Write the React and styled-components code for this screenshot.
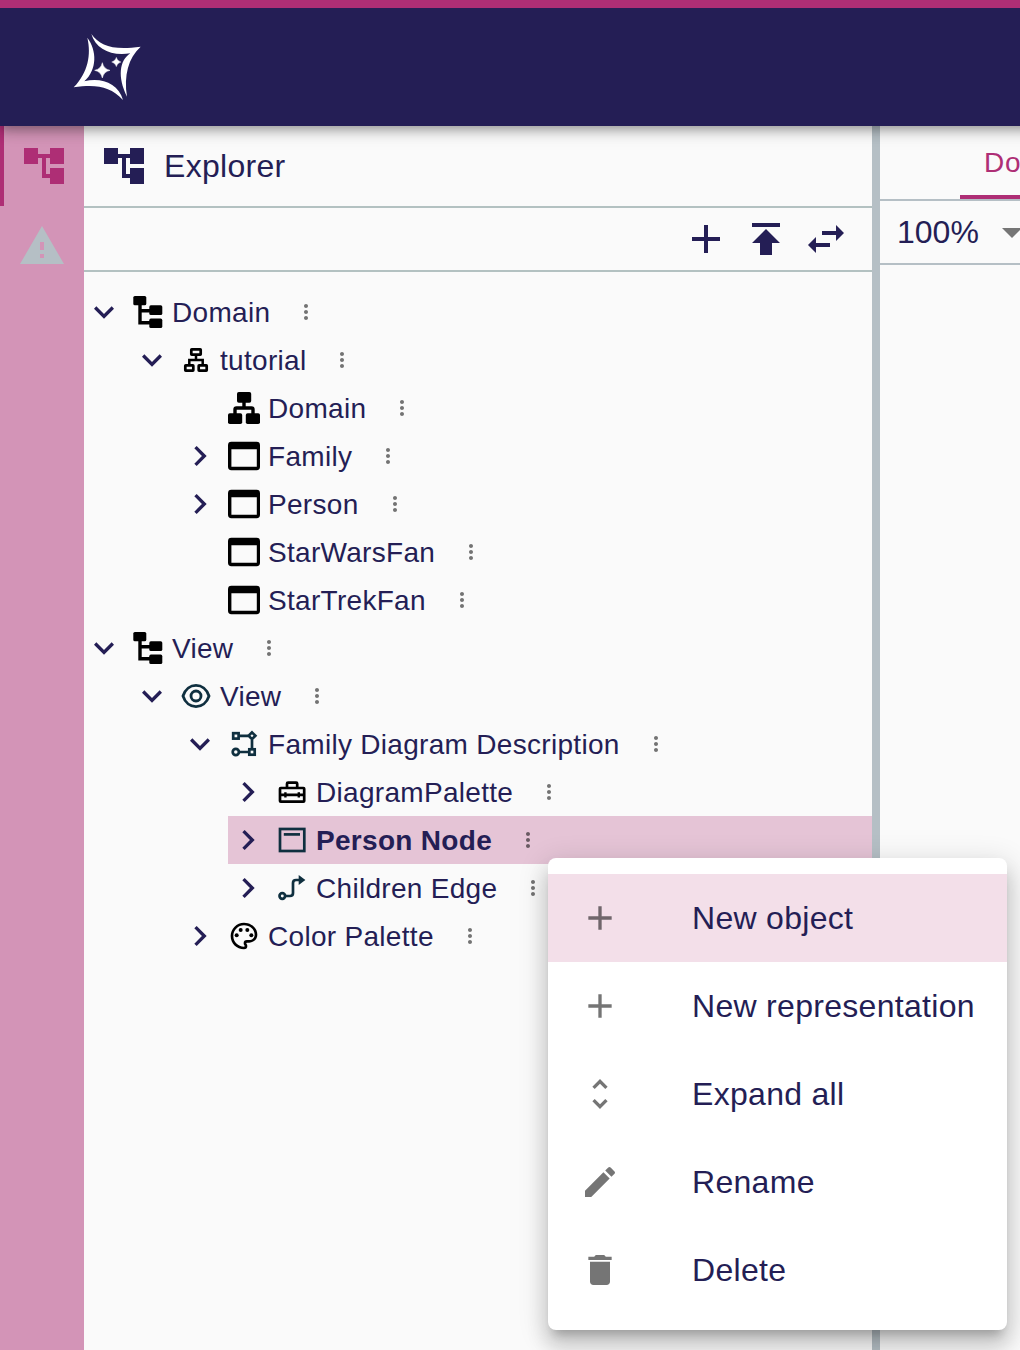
import React from 'react';
import styled, { createGlobalStyle, css } from 'styled-components';
import { MdOutlinePalette } from 'react-icons/md';

const color = {
  pink: '#ae2e75',
  navy: '#241e55',
  rail: '#d394b7',
  selected: '#e5c4d6',
  hover: '#f3dfe9',
  grey: '#b5bfc5',
  line: '#b3c1c1',
  background: '#fafafa',
  ink: '#0f2f3f',
};

const GlobalStyle = createGlobalStyle`
  *, *::before, *::after { box-sizing: border-box; }
  body {
    margin: 0;
    overflow: hidden;
    background: ${color.background};
    color: ${color.navy};
    font-family: "Liberation Sans", Arial, Helvetica, sans-serif;
  }
`;

const Page = styled.div`
  position: relative;
  display: flex;
  flex-direction: column;
  width: 1020px;
  height: 1350px;
  overflow: hidden;
`;

const AppBar = styled.header`
  position: relative;
  z-index: 1;
  flex: none;
  display: flex;
  align-items: center;
  width: 1060px;
  height: 126px;
  padding-left: 72px;
  border-top: 8px solid ${color.pink};
  background: ${color.navy};
  box-shadow: 0 4px 8px -2px rgba(0, 0, 0, 0.2), 0 8px 10px 0 rgba(0, 0, 0, 0.14),
    0 2px 20px 0 rgba(0, 0, 0, 0.12);
`;

const Workbench = styled.main`
  flex: 1;
  display: flex;
  min-height: 0;
`;

const Rail = styled.nav`
  flex: none;
  display: flex;
  flex-direction: column;
  width: 84px;
  background: ${color.rail};
`;

const RailButton = styled.button`
  display: flex;
  align-items: center;
  justify-content: center;
  height: 80px;
  padding: 0;
  border: 0;
  background: none;
  color: ${(p) => (p.$active ? color.pink : color.grey)};
  ${(p) => p.$active && css`border-left: 4px solid ${color.pink};`}
`;

const Panel = styled.section`
  flex: none;
  width: 788px;
  display: flex;
  flex-direction: column;
`;

const PanelHeader = styled.div`
  display: flex;
  align-items: center;
  gap: 16px;
  height: 82px;
  padding: 0 16px;
  border-bottom: 2px solid ${color.line};
  font-size: 32px;
  letter-spacing: 0.3px;
`;

const PanelToolbar = styled.div`
  display: flex;
  align-items: center;
  justify-content: flex-end;
  gap: 12px;
  height: 64px;
  padding-right: 22px;
  border-bottom: 2px solid ${color.line};
`;

const Tree = styled.ul`
  margin: 0;
  padding: 16px 0 0;
  list-style: none;
`;

const Branch = styled.ul`
  margin: 0;
  padding: 0 0 0 48px;
  list-style: none;
`;

const Row = styled.div`
  display: flex;
  align-items: center;
  height: 48px;
  background: ${(p) => (p.$selected ? color.selected : 'transparent')};
  font-size: 28px;
  font-weight: ${(p) => (p.$selected ? 700 : 400)};
  letter-spacing: 0.3px;
  white-space: nowrap;
`;

const Toggle = styled.span`
  flex: none;
  display: flex;
  width: 40px;
  height: 40px;
  margin-right: 8px;
`;

const Label = styled.span`
  margin: 0 24px 0 8px;
  padding-top: 2px;
`;

const More = styled.span`
  display: flex;
  color: rgba(0, 0, 0, 0.54);
`;

const Splitter = styled.div`
  flex: none;
  width: 8px;
  background: ${color.grey};
`;

const Editor = styled.section`
  flex: 1;
  min-width: 0;
  overflow: hidden;
`;

const TabBar = styled.div`
  display: flex;
  height: 75px;
  padding-left: 80px;
  border-bottom: 2px solid ${color.grey};
`;

const Tab = styled.div`
  flex: none;
  display: flex;
  align-items: center;
  padding: 5px 24px 0;
  border-bottom: 4px solid ${color.pink};
  color: ${color.pink};
  font-size: 28px;
  letter-spacing: 0.8px;
`;

const ZoomBar = styled.div`
  display: flex;
  align-items: center;
  gap: 9px;
  height: 64px;
  padding-left: 17px;
  border-bottom: 2px solid ${color.grey};
  font-size: 32px;
  svg { color: #757575; }
`;

const Menu = styled.div`
  position: absolute;
  z-index: 2;
  left: 548px;
  top: 858px;
  width: 459px;
  padding: 16px 0;
  border-radius: 8px;
  background: #fff;
  box-shadow: 0 10px 10px -6px rgba(0, 0, 0, 0.2), 0 16px 20px 2px rgba(0, 0, 0, 0.14),
    0 6px 28px 4px rgba(0, 0, 0, 0.12);
`;

const MenuItem = styled.div`
  display: flex;
  align-items: center;
  height: 88px;
  padding: 0 32px;
  background: ${(p) => (p.$hovered ? color.hover : 'transparent')};
  font-size: 32px;
  letter-spacing: 0.3px;
  white-space: nowrap;
`;

const MenuIcon = styled.span`
  flex: none;
  display: flex;
  width: 112px;
  color: rgba(0, 0, 0, 0.54);
`;

const Svg = styled.svg`
  display: block;
  flex: none;
`;

const glyphs = {
  tree: 'M22 11V3h-7v3H9V3H2v8h7V8h2v10h4v3h7v-8h-7v3h-2V8h2v3z',
  warning: 'M1 21h22L12 2 1 21zm12-3h-2v-2h2v2zm0-4h-2v-4h2v4z',
  add: 'M19 13h-6v6h-2v-6H5v-2h6V5h2v6h6v2z',
  top: 'M5 4v2h14V4H5zm0 10h4v6h6v-6h4l-7-7-7 7z',
  swap: 'M6.99 11L3 15l3.99 4v-3H14v-2H6.99v-3zM21 9l-3.99-4v3H10v2h7.01v3L21 9z',
  down: 'M16.59 8.59L12 13.17 7.41 8.59 6 10l6 6 6-6z',
  right: 'M10 6L8.59 7.41 13.17 12l-4.58 4.59L10 18l6-6z',
  more: 'M12 8c1.1 0 2-.9 2-2s-.9-2-2-2-2 .9-2 2 .9 2 2 2zm0 2c-1.1 0-2 .9-2 2s.9 2 2 2 2-.9 2-2-.9-2-2-2zm0 6c-1.1 0-2 .9-2 2s.9 2 2 2 2-.9 2-2-.9-2-2-2z',
  drop: 'M7 10l5 5 5-5z',
  unfold: 'M12 5.83L15.17 9l1.41-1.41L12 3 7.41 7.59 8.83 9 12 5.83zm0 12.34L8.83 15l-1.41 1.41L12 21l4.59-4.59L15.17 15 12 18.17z',
  edit: 'M3 17.25V21h3.75L17.81 9.94l-3.75-3.75L3 17.25zM20.71 7.04c.39-.39.39-1.02 0-1.41l-2.34-2.34a.996.996 0 0 0-1.41 0l-1.83 1.83 3.75 3.75 1.83-1.83z',
  remove: 'M6 19c0 1.1.9 2 2 2h8c1.1 0 2-.9 2-2V7H6v12zM19 4h-3.5l-1-1h-5l-1 1H5v2h14V4z',
};

function Glyph({ name, size = 48 }) {
  return (
    <Svg width={size} height={size} viewBox="0 0 24 24" fill="currentColor">
      <path d={glyphs[name]} />
    </Svg>
  );
}

const drawings = {
  model: (
    <g>
      <rect x="1.3" y="0" width="13" height="9.3" rx="1.6" />
      <rect x="17.3" y="9.3" width="13" height="9.7" rx="1.6" />
      <rect x="17.3" y="22.6" width="13" height="9.4" rx="1.6" />
      <path d="M8 9V26.7H18M8 14.8H18" fill="none" stroke="#000" strokeWidth="3.4" />
    </g>
  ),
  domainModel: (
    <g fill="none" stroke="#000" strokeWidth="2.7">
      <rect x="11.3" y="5.3" width="9.4" height="5.4" rx=".4" />
      <rect x="5.3" y="21.3" width="8" height="5.4" rx=".4" />
      <rect x="18.7" y="21.3" width="8" height="5.4" rx=".4" />
      <path d="M16 11V16M9.3 21V16H22.7V21" strokeWidth="2.5" />
    </g>
  ),
  domain: (
    <g>
      <rect x="9" y="0" width="14.2" height="10.8" rx="1.8" />
      <rect x="0" y="21.2" width="14.2" height="10.8" rx="1.8" />
      <rect x="17.8" y="21.2" width="14.2" height="10.8" rx="1.8" />
      <path d="M16 10V16M7 22V17.5Q7 16 8.5 16H23.5Q25 16 25 17.5V22" fill="none" stroke="#000" strokeWidth="3.4" />
    </g>
  ),
  entity: (
    <path fillRule="evenodd" d="M3.4 1.8H28.6Q32 1.8 32 5.2V26.8Q32 30.2 28.6 30.2H3.4Q0 30.2 0 26.8V5.2Q0 1.8 3.4 1.8ZM3.4 9.2V26.8H28.8V9.2Z" />
  ),
  view: (
    <g fill="none" stroke={color.ink} strokeWidth="2.8">
      <path d="M3 16C5.2 9 10.5 5.3 16 5.3S26.8 9 29 16C26.8 23 21.5 26.7 16 26.7S5.2 23 3 16Z" />
      <circle cx="16" cy="16" r="5" />
    </g>
  ),
  diagram: (
    <g fill="none" stroke={color.ink} strokeWidth="2.7">
      <rect x="5.2" y="5.2" width="5.4" height="5.4" />
      <rect x="21.3" y="21.3" width="5.4" height="5.4" />
      <circle cx="7.8" cy="24" r="3.1" />
      <path d="M24 4.4L27.4 7.8 24 11.2 20.6 7.8Z" />
      <path d="M11 7.9H20M24 12V21M11 24H21" />
    </g>
  ),
  toolbox: (
    <g fill="none" stroke="#000" strokeWidth="2.7">
      <rect x="4" y="12" width="24.2" height="13.7" rx=".8" />
      <path d="M11 12V7.8Q11 6.7 12.1 6.7H20.1Q21.2 6.7 21.2 7.8V12M4 18.9H28.2" />
      <path d="M9.4 16.2V21.6M22.8 16.2V21.6" strokeWidth="2.4" />
    </g>
  ),
  node: (
    <g fill="none" stroke={color.ink} strokeWidth="2.7">
      <rect x="4" y="5" width="24.3" height="22" />
      <path d="M7.8 10.4H24" strokeWidth="2.7" />
    </g>
  ),
  edge: (
    <g fill="none" stroke={color.ink} strokeWidth="2.7">
      <circle cx="6.3" cy="24" r="2.8" />
      <path d="M9 24H14Q17 24 17 21V11Q17 8 20 8H24" />
      <path d="M22.7 3L29.4 8 22.7 13Z" fill={color.ink} stroke="none" />
    </g>
  ),
};

function NodeIcon({ kind }) {
  if (kind === 'palette') {
    return <Svg as={MdOutlinePalette} size={32} color="#000" />;
  }
  return (
    <Svg width="32" height="32" viewBox="0 0 32 32">
      {drawings[kind]}
    </Svg>
  );
}

function Logo() {
  return (
    <Svg width="72" height="72" viewBox="35 32 216 216" fill="#fff">
      <path d="M93 41C119 77 160 91 241 79C204 112 190 165 200 229C171 170 177 121 210 99C154 109 106 86 93 41Z" />
      <path d="M81 52C93 103 83 157 40 201C106 191 149 197 188 239C174 188 121 170 72 183C111 147 110 91 81 52Z" />
      <path d="M126 127Q130 146 149 150Q130 154 126 173Q122 154 103 150Q122 146 126 127Z" stroke="#fff" strokeWidth="1.5" />
      <path d="M168 111Q171 122 182 125Q171 128 168 139Q165 128 154 125Q165 122 168 111Z" stroke="#fff" strokeWidth="1" />
    </Svg>
  );
}

const nodes = [
  {
    label: 'Domain', icon: 'model', open: true,
    children: [
      {
        label: 'tutorial', icon: 'domainModel', open: true,
        children: [
          { label: 'Domain', icon: 'domain' },
          { label: 'Family', icon: 'entity', open: false },
          { label: 'Person', icon: 'entity', open: false },
          { label: 'StarWarsFan', icon: 'entity' },
          { label: 'StarTrekFan', icon: 'entity' },
        ],
      },
    ],
  },
  {
    label: 'View', icon: 'model', open: true,
    children: [
      {
        label: 'View', icon: 'view', open: true,
        children: [
          {
            label: 'Family Diagram Description', icon: 'diagram', open: true,
            children: [
              { label: 'DiagramPalette', icon: 'toolbox', open: false },
              { label: 'Person Node', icon: 'node', open: false, selected: true },
              { label: 'Children Edge', icon: 'edge', open: false },
            ],
          },
          { label: 'Color Palette', icon: 'palette', open: false },
        ],
      },
    ],
  },
];

function TreeNode({ node }) {
  return (
    <li>
      <Row $selected={node.selected}>
        <Toggle>
          {node.open !== undefined && <Glyph name={node.open ? 'down' : 'right'} size={40} />}
        </Toggle>
        <NodeIcon kind={node.icon} />
        <Label>{node.label}</Label>
        <More><Glyph name="more" size={24} /></More>
      </Row>
      {node.children && (
        <Branch>
          {node.children.map((child) => <TreeNode key={child.label} node={child} />)}
        </Branch>
      )}
    </li>
  );
}

const actions = [
  { label: 'New object', icon: 'add', hovered: true },
  { label: 'New representation', icon: 'add' },
  { label: 'Expand all', icon: 'unfold' },
  { label: 'Rename', icon: 'edit' },
  { label: 'Delete', icon: 'remove' },
];

export default function App() {
  return (
    <Page>
      <GlobalStyle />
      <AppBar><Logo /></AppBar>
      <Workbench>
        <Rail>
          <RailButton $active><Glyph name="tree" /></RailButton>
          <RailButton><Glyph name="warning" /></RailButton>
        </Rail>
        <Panel>
          <PanelHeader><Glyph name="tree" />Explorer</PanelHeader>
          <PanelToolbar>
            <Glyph name="add" />
            <Glyph name="top" />
            <Glyph name="swap" />
          </PanelToolbar>
          <Tree>
            {nodes.map((node) => <TreeNode key={node.label} node={node} />)}
          </Tree>
        </Panel>
        <Splitter />
        <Editor>
          <TabBar><Tab>Domain</Tab></TabBar>
          <ZoomBar>100%<Glyph name="drop" /></ZoomBar>
        </Editor>
      </Workbench>
      <Menu>
        {actions.map((action) => (
          <MenuItem key={action.label} $hovered={action.hovered}>
            <MenuIcon><Glyph name={action.icon} size={40} /></MenuIcon>
            {action.label}
          </MenuItem>
        ))}
      </Menu>
    </Page>
  );
}
